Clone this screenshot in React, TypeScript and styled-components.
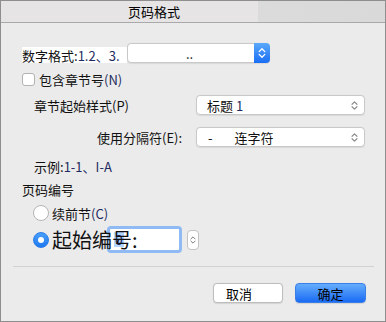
import React from "react";
import styled, { createGlobalStyle } from "styled-components";

const Global = createGlobalStyle`
  html, body { margin: 0; padding: 0; background: #ececec; }
  * { box-sizing: border-box; }
`;

const Window = styled.div`
  width: 386px;
  height: 322px;
  border: 1px solid #8e8e8e;
  background: #ebebeb;
  font-family: "Noto Sans CJK SC", "Noto Sans", sans-serif;
  font-size: 13px;
  color: #111;
  display: flex;
  flex-direction: column;
  overflow: hidden;
`;

const TitleBar = styled.div`
  height: 22px;
  flex: none;
  border-bottom: 1px solid #a9a9a9;
  background: linear-gradient(to right, #e6e4e5 0, #e6e4e5 257px, #dbdbdb 257px, #d9d9d9 100%);
  display: flex;
  align-items: center;
  padding-left: 127px;
  font-size: 13px;
  line-height: 1;
  color: #000;
`;

const Content = styled.div`
  display: flex;
  flex-direction: column;
  padding: 0 20px 0 21px;
`;

const Row = styled.div<{ $top: number; $h: number; $indent?: number }>`
  display: flex;
  align-items: center;
  margin-top: ${(p) => p.$top}px;
  height: ${(p) => p.$h}px;
  padding-left: ${(p) => p.$indent ?? 0}px;
  white-space: nowrap;
  line-height: 1;
`;

const Accent = styled.span`
  color: #1d2b5e;
`;

const WhiteLabel = styled.div`
  align-self: flex-end;
  height: 16px;
  width: 105px;
  background: #fff;
  display: flex;
  align-items: center;
`;

const SelectBox = styled.div<{ $w: number; $x?: number }>`
  width: ${(p) => p.$w}px;
  height: 100%;
  margin-left: ${(p) => p.$x ?? 0}px;
  background: #fff;
  border: 1px solid #c9c9c9;
  border-radius: 4px;
  box-shadow: 0 0.5px 1px rgba(0, 0, 0, 0.08);
  display: flex;
  align-items: center;
  position: relative;
`;

const SelectText = styled.div<{ $pad: number }>`
  flex: 1;
  padding-left: ${(p) => p.$pad}px;
  display: flex;
  align-items: center;
`;

const BlueStepper = styled.div`
  width: 16px;
  height: calc(100% + 2px);
  margin: -1px -1px -1px 0;
  border-radius: 0 4px 4px 0;
  background: linear-gradient(#5aa9fb, #1b6ef5);
  display: flex;
  align-items: center;
  justify-content: center;
`;

const GrayArrows = styled.div`
  width: 20px;
  display: flex;
  align-items: center;
  justify-content: center;
`;

const Check = styled.div`
  width: 13px;
  height: 13px;
  background: #fff;
  border: 1px solid #b3b3b3;
  border-radius: 3px;
  margin-right: 4px;
`;

const Grid2 = styled.div`
  width: 174px;
  flex: none;
`;

const Radio = styled.div<{ $on?: boolean }>`
  width: 16px;
  height: 16px;
  border-radius: 50%;
  flex: none;
  background: ${(p) => (p.$on ? "linear-gradient(#4aa0fb, #1e78f0)" : "#fff")};
  border: 1px solid ${(p) => (p.$on ? "#2a7ce8" : "#b5b5b5")};
  display: flex;
  align-items: center;
  justify-content: center;
  margin-left: 11px;
  margin-right: 3px;
  &::after {
    content: "";
    width: 6px;
    height: 6px;
    border-radius: 50%;
    background: ${(p) => (p.$on ? "#fff" : "transparent")};
  }
`;

const BigLabel = styled.div`
  width: 55px;
  flex: none;
  font-size: 20px;
  position: relative;
  z-index: 1;
  overflow: visible;
  line-height: 1;
  padding-top: 1px;
`;

const NumberInput = styled.div`
  width: 75px;
  height: 27px;
  flex: none;
  border: 3px solid #8fbaf4;
  border-radius: 4px;
  background: #fff;
  display: flex;
  align-items: center;
  padding-left: 4px;
`;

const Selected = styled.span`
  background: #b3d4fc;
  color: #1a2a60;
  font-size: 14px;
  line-height: 15px;
  padding: 0 1px;
`;

const Stepper = styled.div`
  width: 12px;
  height: 20px;
  margin-left: 5px;
  background: #fff;
  border: 1px solid #c3c3c3;
  border-radius: 4px;
  display: flex;
  align-items: center;
  justify-content: center;
`;

const Divider = styled.div`
  margin: 13px -9px 0 -9px;
  height: 1px;
  background: #d2d2d2;
`;

const ButtonRow = styled.div`
  display: flex;
  justify-content: flex-end;
  gap: 12px;
  margin-top: 16px;
  margin-right: -1px;
`;

const Button = styled.div<{ $primary?: boolean; $w: number }>`
  width: ${(p) => p.$w}px;
  height: 20px;
  border-radius: 4px;
  display: flex;
  align-items: center;
  justify-content: ${(p) => (p.$primary ? "center" : "flex-start")};
  padding-left: ${(p) => (p.$primary ? 0 : 12)}px;
  line-height: 1;
  color: #000;
  background: ${(p) => (p.$primary ? "linear-gradient(#65adfd, #1a6bf4)" : "#fff")};
  border: 1px solid ${(p) => (p.$primary ? "#3a7ee8" : "#bdbdbd")};
  box-shadow: 0 0.5px 1px rgba(0, 0, 0, 0.1);
`;

const Chevrons = ({ color, w = 8, h = 12 }: { color: string; w?: number; h?: number }) => (
  <svg width={w} height={h} viewBox="0 0 8 12" fill="none" stroke={color} strokeWidth="1.3" strokeLinecap="round" strokeLinejoin="round">
    <path d="M1.2 4.6 L4 1.8 L6.8 4.6" />
    <path d="M1.2 7.4 L4 10.2 L6.8 7.4" />
  </svg>
);

export default function App() {
  return (
    <>
      <Global />
      <Window>
        <TitleBar>页码格式</TitleBar>
        <Content>
          <Row $top={20} $h={20}>
            <WhiteLabel>
              数字格式: <Accent>1.2、3.</Accent>
            </WhiteLabel>
            <SelectBox $w={143}>
              <SelectText $pad={58}>..</SelectText>
              <BlueStepper>
                <Chevrons color="#fff" />
              </BlueStepper>
            </SelectBox>
          </Row>
          <Row $top={9} $h={15}>
            <Check />
            包含章节号<Accent>(N)</Accent>
          </Row>
          <Row $top={8} $h={20}>
            <Grid2>
              <Row $top={0} $h={20} $indent={12}>
                章节起始样式(P)
              </Row>
            </Grid2>
            <SelectBox $w={169}>
              <SelectText $pad={10}>
                标题 <Accent>&nbsp;1</Accent>
              </SelectText>
              <GrayArrows>
                <Chevrons color="#8a8a8a" w={7} h={11} />
              </GrayArrows>
            </SelectBox>
          </Row>
          <Row $top={12} $h={20}>
            <Grid2>
              <Row $top={0} $h={20} $indent={75}>
                使用分隔符(E):
              </Row>
            </Grid2>
            <SelectBox $w={169}>
              <SelectText $pad={11}>
                -<span style={{ marginLeft: 22, background: "#fff" }}>连字符</span>
              </SelectText>
              <GrayArrows>
                <Chevrons color="#8a8a8a" w={7} h={11} />
              </GrayArrows>
            </SelectBox>
          </Row>
          <Row $top={11} $h={16} $indent={12}>
            示例:<Accent>1-1、I-A</Accent>
          </Row>
          <Row $top={7} $h={16}>
            页码编号
          </Row>
          <Row $top={8} $h={16}>
            <Radio />
            续前节<Accent>(C)</Accent>
          </Row>
          <Row $top={5} $h={27}>
            <Radio $on />
            <BigLabel>起始编号:</BigLabel>
            <NumberInput>
              <Selected>0</Selected>
            </NumberInput>
            <Stepper>
              <Chevrons color="#7a7a7a" w={6} h={10} />
            </Stepper>
          </Row>
          <Divider />
          <ButtonRow>
            <Button $w={70}>取消</Button>
            <Button $w={71} $primary>
              确定
            </Button>
          </ButtonRow>
        </Content>
      </Window>
    </>
  );
}
